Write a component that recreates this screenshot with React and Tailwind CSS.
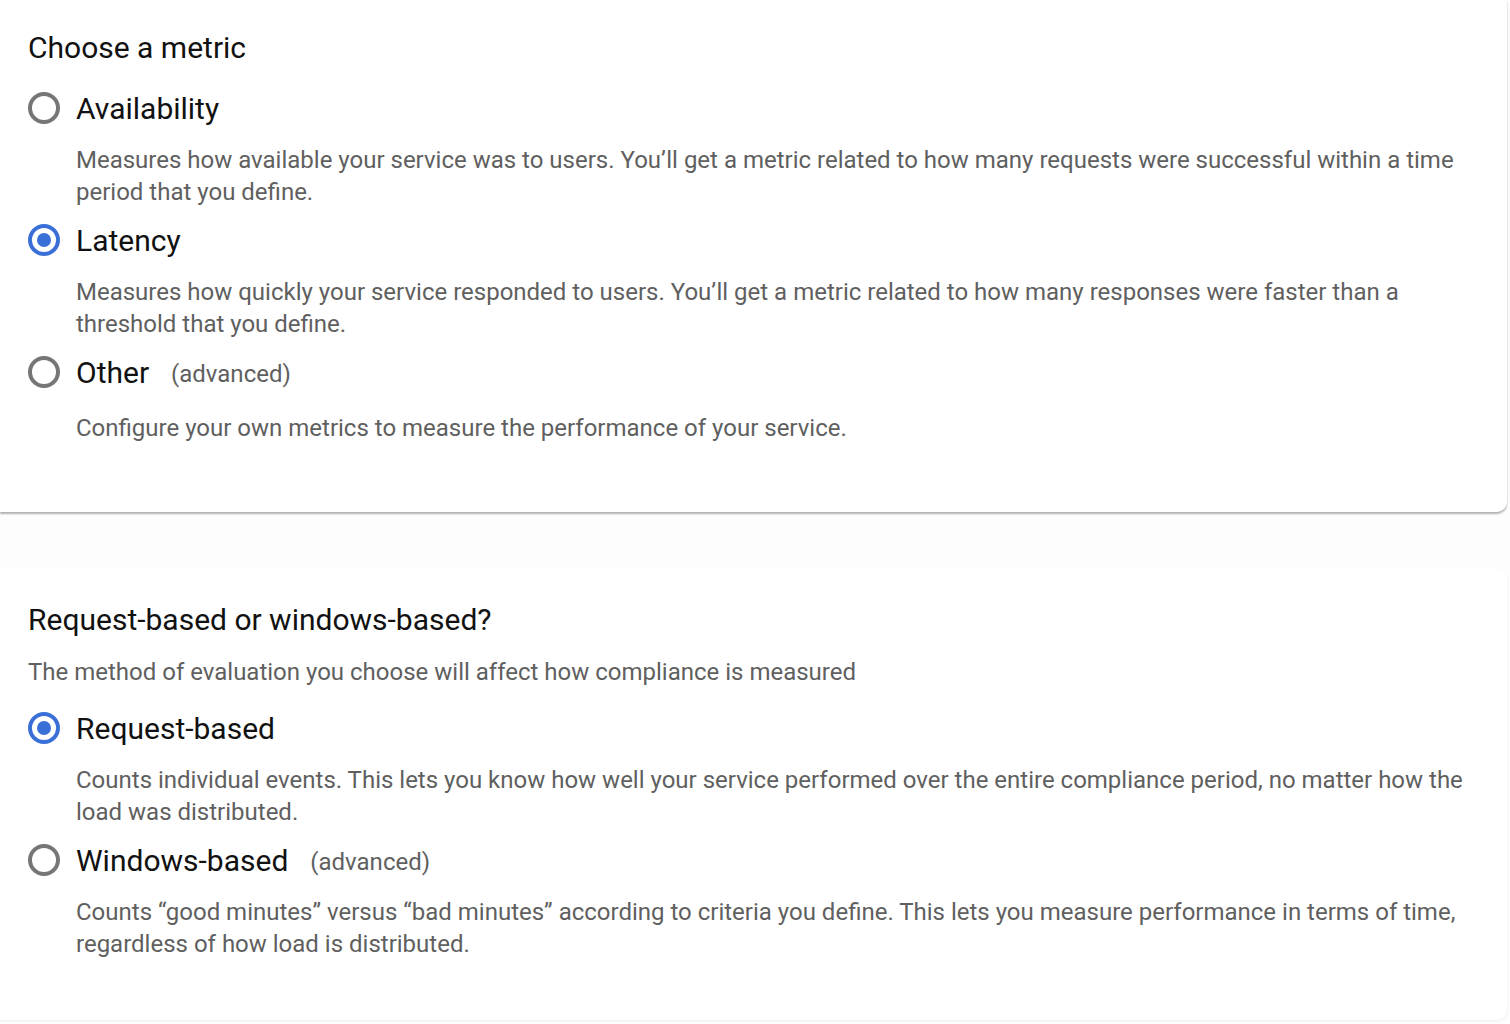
import React from "react"

function Radio({ checked }) {
  return checked ? (
    <span className="flex h-8 w-8 shrink-0 items-center justify-center rounded-full border-[4px] border-[#3b6fd8]">
      <span className="h-[14px] w-[14px] rounded-full bg-[#3b6fd8]" />
    </span>
  ) : (
    <span className="h-8 w-8 shrink-0 rounded-full border-[4px] border-[#767676]" />
  )
}

function Option({ label, note, desc, checked, wide }) {
  return (
    <div>
      <div className="flex h-[40px] items-center gap-4">
        <Radio checked={checked} />
        <span className="text-[30px] text-[#111]">{label}</span>
        {note && <span className="ml-[6px] mt-[3px] text-[24px] text-[#5f5f5f]">{note}</span>}
      </div>
      <p className={`${wide ? "mt-[20px]" : "mt-[16px]"} pl-12 pr-4 text-[24px] leading-[32px] text-[#5f5f5f]`}>{desc}</p>
    </div>
  )
}

export default function App() {
  return (
    <div className="min-h-screen bg-[#fdfdfd] font-['Roboto',sans-serif]">
      <section className="w-[1507px] rounded-br-[10px] bg-white pl-7 pt-[28px] pb-[68px] shadow-[0_2px_2px_rgba(0,0,0,0.3)]">
        <h2 className="text-[30px] leading-[40px] text-[#111]">Choose a metric</h2>
        <div className="mt-[20px] flex flex-col gap-[12px]">
          <Option
            label="Availability"
            desc="Measures how available your service was to users. You’ll get a metric related to how many requests were successful within a time period that you define."
          />
          <Option
            label="Latency"
            checked
            desc="Measures how quickly your service responded to users. You’ll get a metric related to how many responses were faster than a threshold that you define."
          />
          <Option
            label="Other"
            note="(advanced)"
            wide
            desc="Configure your own metrics to measure the performance of your service."
          />
        </div>
      </section>

      <section className="mt-[56px] w-[1507px] rounded-r-[10px] bg-white pl-7 pt-[32px] pb-[60px] shadow-[0_1px_3px_rgba(0,0,0,0.08)]">
        <h2 className="text-[30px] leading-[40px] text-[#111]">Request-based or windows-based?</h2>
        <p className="mt-[16px] text-[24px] leading-[32px] text-[#5f5f5f]">
          The method of evaluation you choose will affect how compliance is measured
        </p>
        <div className="mt-[20px] flex flex-col gap-[12px]">
          <Option
            label="Request-based"
            checked
            desc="Counts individual events. This lets you know how well your service performed over the entire compliance period, no matter how the load was distributed."
          />
          <Option
            label="Windows-based"
            note="(advanced)"
            desc="Counts “good minutes” versus “bad minutes” according to criteria you define. This lets you measure performance in terms of time, regardless of how load is distributed."
          />
        </div>
      </section>
    </div>
  )
}
